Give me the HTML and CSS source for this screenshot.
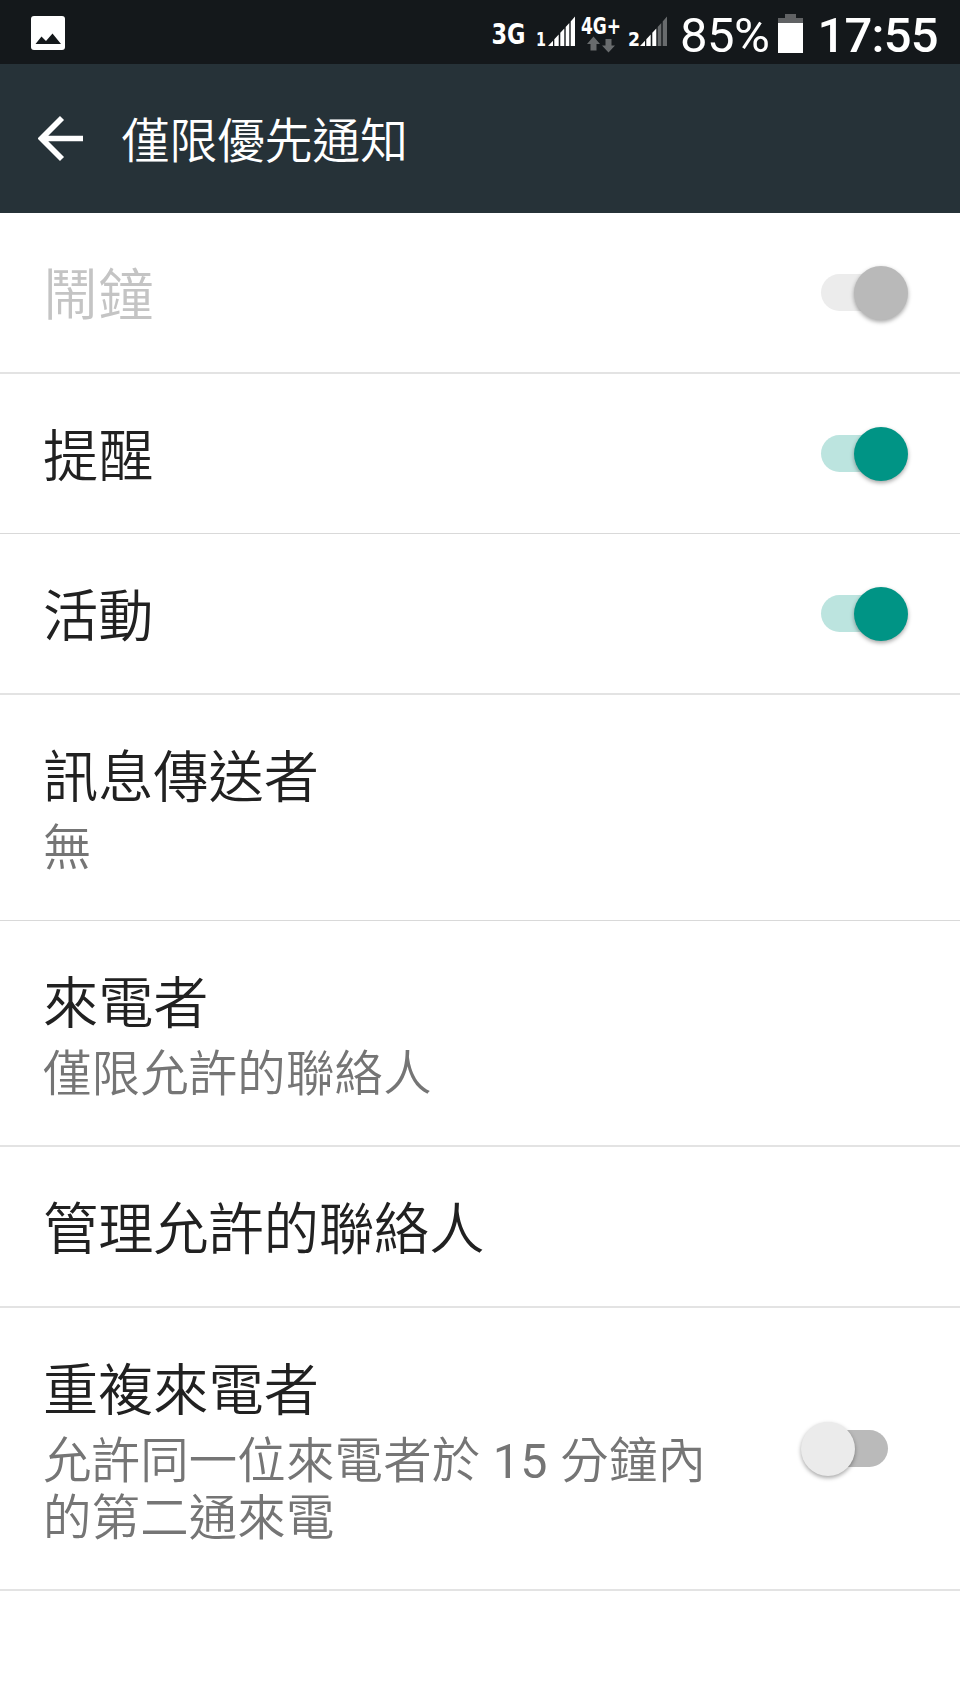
FILE: index.html
```html
<!DOCTYPE html>
<html lang="zh-Hant">
<head>
<meta charset="utf-8">
<title>僅限優先通知</title>
<link rel="stylesheet" href="styles.css">
</head>
<body>
<header class="status">
  <svg class="photo" width="34" height="34" viewBox="0 0 34 34"><rect width="34" height="34" rx="3" fill="#fff"/><path d="M4.500 28 10.500 20.500l4.500 4.500L21.500 17.500 30 28z" fill="#14181b"/></svg>
  <svg class="signals" width="190" height="64" viewBox="486 0 190 64">
    <g class="blocky">
      <text x="491.500" y="43.500" font-size="29" textLength="34" lengthAdjust="spacingAndGlyphs">3G</text>
      <text x="536" y="46" font-size="19.500" textLength="10" lengthAdjust="spacingAndGlyphs">1</text>
      <text x="581" y="33.500" font-size="22.500" textLength="40" lengthAdjust="spacingAndGlyphs">4G+</text>
      <text x="628" y="46" font-size="19.500" textLength="12" lengthAdjust="spacingAndGlyphs">2</text>
    </g>
    <path d="M548 46 553 40.700V46zM554.300 46V39.200L558.700 34.500V46zM560.300 46V32.800L564.300 28.500V46zM565.700 46V27L569.300 23V46zM570.700 46V21.500L575 16.500V46z" fill="#fff"/>
    <path d="M640 46 645 40.700V46zM646.300 46V39.200L650.700 34.500V46zM652.300 46V32.800L656.300 28.500V46z" fill="#fff"/>
    <path d="M657.700 46V27L661.300 23V46zM662.700 46V21.500L667 16.500V46zM593.500 36.500 600 44h-3.500v6.500h-6V44H587zM608.500 52.500 602 45.500h3.500V39h6v6.500H615z" fill="#686b6d"/>
  </svg>
  <span class="percent">85%</span>
  <svg class="battery" width="25" height="40" viewBox="0 0 25 40"><path d="M0 4h7V0h11v4h7v6H0z" fill="#606264"/><path d="M0 9h25v30H0z" fill="#fff"/></svg>
  <span class="clock">17:55</span>
</header>
<nav class="bar">
  <svg class="back" width="46" height="46" viewBox="0 0 46 46"><path d="M45 22.500H5M24 2 3.500 22.500 24 43" fill="none" stroke="#fff" stroke-width="5.700"/></svg>
  <h1 class="heading">僅限優先通知</h1>
</nav>
<main class="list">
  <section class="row disabled"><div class="text"><div class="title">鬧鐘</div></div><div class="switch locked"><i class="knob"></i></div></section>
  <section class="row thin"><div class="text"><div class="title">提醒</div></div><div class="switch on"><i class="knob"></i></div></section>
  <section class="row"><div class="text"><div class="title">活動</div></div><div class="switch on"><i class="knob"></i></div></section>
  <section class="row double thin"><div class="text"><div class="title">訊息傳送者</div><div class="summary">無</div></div></section>
  <section class="row double"><div class="text"><div class="title">來電者</div><div class="summary">僅限允許的聯絡人</div></div></section>
  <section class="row"><div class="text"><div class="title">管理允許的聯絡人</div></div></section>
  <section class="row triple"><div class="text"><div class="title">重複來電者</div><div class="summary">允許同一位來電者於<span class="num"> 15 </span>分鐘內<br>的第二通來電</div></div><div class="switch off"><i class="knob"></i></div></section>
</main>
</body>
</html>
```
FILE: styles.css
```css
* { box-sizing: border-box; }
body { margin: 0; width: 960px; height: 1706px; overflow: hidden; background: #fff; font-family: "Noto Sans CJK TC", sans-serif; font-weight: 350; }
svg { display: block; flex: none; }
.status { display: flex; align-items: flex-start; height: 64px; background: #14181b; color: #fff; font-family: Roboto, sans-serif; }
.photo { margin: 16px 0 0 31px; }
.signals { margin-left: 421px; }
.blocky { fill: #fff; font-family: "DejaVu Sans", sans-serif; font-weight: 700; }
.percent { width: 94px; margin-left: 4px; font-size: 49px; line-height: 72px; font-weight: 400; letter-spacing: -0.5px; white-space: nowrap; }
.battery { margin: 14px 0 0 4px; }
.clock { margin-left: 14.5px; font-size: 49px; line-height: 72px; font-weight: 500; letter-spacing: -0.8px; white-space: nowrap; }
.bar { display: flex; align-items: flex-start; height: 149px; background: #263238; color: #fff; }
.back { margin: 52px 0 0 37.5px; }
.heading { margin: 41px 0 0 38px; font-size: 48px; line-height: 64px; font-weight: 350; letter-spacing: -0.3px; white-space: nowrap; }
.row { display: flex; justify-content: space-between; align-items: center; height: 161px; padding: 0 72px 0 43px; border-bottom: 2px solid #e3e3e3; }
.thin { border-bottom-width: 1px; height: 160px; border-color: #d9d9d9; }
.double { height: 226px; }
.triple { height: 283px; }
.text { align-self: flex-start; padding-top: 41px; color: #212121; }
.title { font-size: 55.2px; line-height: 74px; white-space: nowrap; }
.disabled .title { color: #c4c4c4; }
.summary { margin-top: 6px; font-size: 48.4px; line-height: 57px; letter-spacing: 0.2px; color: #757575; white-space: nowrap; }
.num { font-family: Roboto, sans-serif; font-weight: 400; line-height: 1; letter-spacing: 0.4px; white-space: pre; }
.switch { position: relative; width: 67px; height: 37px; margin-bottom: 1px; border-radius: 19px; background: #bababa; }
.knob { position: absolute; top: -8px; left: -20px; width: 54px; height: 54px; border-radius: 50%; background: #ebebeb; box-shadow: 0 2px 4px rgba(0, 0, 0, .35); }
.on { background: #bce4df; }
.locked { background: #ececec; }
.on .knob, .locked .knob { left: 33px; }
.on .knob { background: #009485; }
.locked .knob { background: #b9b9b9; }
```
